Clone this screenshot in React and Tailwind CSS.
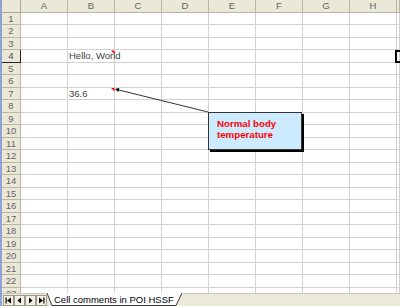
import React from "react";

const COLS = ["A", "B", "C", "D", "E", "F", "G", "H", "I"];
const ROWS = Array.from({ length: 23 }, (_, i) => i + 1);

function Cell({ r, c }) {
  let text = null;
  if (c === "B" && r === 4) text = "Hello, World";
  if (c === "B" && r === 7) text = "36.6";
  return (
    <div className="border-r border-b border-[#d2d2d2] flex items-center pl-[1px] overflow-visible whitespace-nowrap text-[9.5px] leading-none text-[#444]">
      {text}
    </div>
  );
}

function NavButton({ children }) {
  return (
    <div className="w-[11px] h-[11px] mt-[1px] border border-[#9d9a8a] bg-[#f3f1e6] flex items-center justify-center">
      {children}
    </div>
  );
}

export default function App() {
  return (
    <div className="w-[400px] h-[306px] overflow-hidden bg-white relative flex flex-col border-l-2 border-[#8ca4d8] font-['Liberation_Sans',Arial,sans-serif]">
      <div className="h-[293px] overflow-hidden shrink-0">
        <div className="grid grid-cols-[19px_repeat(8,47px)_1fr] auto-rows-[12.5px]">
          <div className="bg-[#ebe8d7] border-r border-b border-[#aca899]" />
          {COLS.map((c) => (
            <div
              key={c}
              className="bg-[#ebe8d7] border-r border-b border-[#b9b6a5] flex items-center justify-center overflow-hidden text-[9.5px] leading-none text-[#666]"
            >
              {c === "I" ? "" : c}
            </div>
          ))}
          {ROWS.map((r) => (
            <React.Fragment key={r}>
              <div
                className={
                  r === 4
                    ? "bg-[#ebe8d7] border-r border-b border-[#222] flex items-center justify-center text-[9.5px] leading-none text-[#444]"
                    : "bg-[#ebe8d7] border-r border-b border-[#b9b6a5] flex items-center justify-center text-[9.5px] leading-none text-[#666]"
                }
              >
                {r}
              </div>
              {COLS.map((c) => (
                <Cell key={c} r={r} c={c} />
              ))}
            </React.Fragment>
          ))}
        </div>
      </div>

      <div className="flex-1 bg-[#ece9d8] border-t border-[#c9c6b6] flex items-start">
        <div className="flex pl-[1px]">
          <NavButton>
            <svg width="7" height="7" viewBox="0 0 7 7">
              <rect x="0.5" y="0.5" width="1.2" height="6" fill="#000" />
              <polygon points="2,3.5 6,0.5 6,6.5" fill="#000" />
            </svg>
          </NavButton>
          <NavButton>
            <svg width="7" height="7" viewBox="0 0 7 7">
              <polygon points="1.5,3.5 5,0.5 5,6.5" fill="#000" />
            </svg>
          </NavButton>
          <NavButton>
            <svg width="7" height="7" viewBox="0 0 7 7">
              <polygon points="5.5,3.5 2,0.5 2,6.5" fill="#000" />
            </svg>
          </NavButton>
          <NavButton>
            <svg width="7" height="7" viewBox="0 0 7 7">
              <polygon points="5,3.5 1,0.5 1,6.5" fill="#000" />
              <rect x="5.3" y="0.5" width="1.2" height="6" fill="#000" />
            </svg>
          </NavButton>
        </div>
        <div className="relative w-[135px] h-[13px] -mt-[1px]">
          <svg className="absolute inset-0" width="135" height="13" viewBox="0 0 135 13">
            <polygon points="0,0 135,0 129,12.5 5,12.5" fill="#fff" />
            <polyline points="0,0 5,12.5 129,12.5 135,0" fill="none" stroke="#333" strokeWidth="1" />
          </svg>
          <div className="relative pl-[7px] h-full flex items-center text-[9.5px] leading-none text-black whitespace-nowrap">
            Cell comments in POI HSSF
          </div>
        </div>
      </div>

      <svg className="absolute top-0 -left-[2px] pointer-events-none" width="400" height="306" viewBox="0 0 400 306">
        <polygon points="111,50.5 114.5,50.5 114.5,54" fill="#ff0000" />
        <polygon points="111,88 114.5,88 114.5,91.5" fill="#ff0000" />
        <line x1="118" y1="89.8" x2="208" y2="112" stroke="#333" strokeWidth="1" />
        <polygon points="115,89 118.4,91.9 119.4,88" fill="#000" />
      </svg>

      <div className="absolute left-[393px] top-[50px] w-[12px] h-[13px] border-2 border-black" />

      <div className="absolute left-[206px] top-[112px] w-[94px] h-[38px] bg-[#cdebff] border border-[#333] shadow-[2px_2px_0_#000] pl-[8px] pt-[5px]">
        <div className="text-[9.7px] leading-[11px] font-bold text-[#ff0000]">
          Normal body
          <br />
          temperature
        </div>
      </div>
    </div>
  );
}
